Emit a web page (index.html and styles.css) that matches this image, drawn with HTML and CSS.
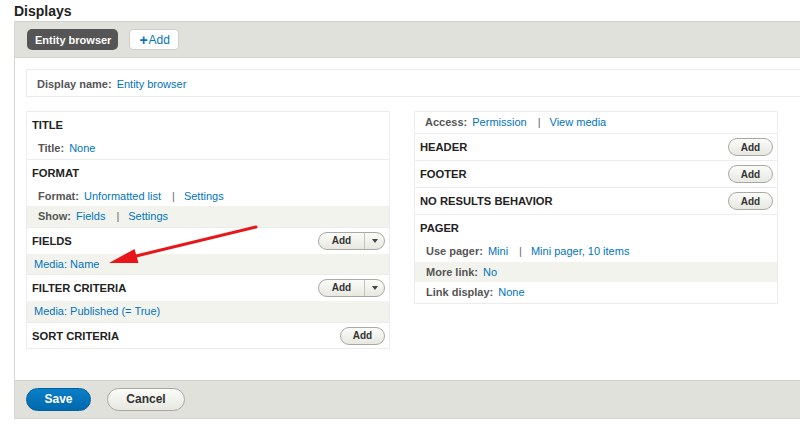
FILE: index.html
```html
<!DOCTYPE html>
<html lang="en">
<head>
<meta charset="utf-8">
<title>Displays</title>
<link rel="stylesheet" href="styles.css">
</head>
<body>
<h2 class="page-title">Displays</h2>
<div class="displays">
  <div class="tabs-bar">
    <span class="tab-active">Entity browser</span>
    <a class="tab-add" href="#"><span class="plus">+</span>Add</a>
  </div>
  <div class="display-body">
    <div class="display-name"><span class="label">Display name:</span> <a href="#">Entity browser</a></div>
    <div class="columns">
      <div class="col">
        <div class="sec">
          <div class="sec-head">TITLE</div>
          <div class="row"><span class="label">Title:</span> <a href="#">None</a></div>
        </div>
        <div class="sec">
          <div class="sec-head">FORMAT</div>
          <div class="row"><span class="label">Format:</span> <a href="#">Unformatted list</a><span class="sep">|</span><a href="#">Settings</a></div>
          <div class="row alt"><span class="label">Show:</span> <a href="#">Fields</a><span class="sep">|</span><a href="#">Settings</a></div>
        </div>
        <div class="sec">
          <div class="sec-head">FIELDS
            <span class="btn-split"><span class="btn-main">Add</span><span class="btn-drop"><span class="caret"></span></span></span>
          </div>
          <div class="row alt item"><a href="#">Media: Name</a></div>
        </div>
        <div class="sec">
          <div class="sec-head">FILTER CRITERIA
            <span class="btn-split"><span class="btn-main">Add</span><span class="btn-drop"><span class="caret"></span></span></span>
          </div>
          <div class="row alt item"><a href="#">Media: Published (= True)</a></div>
        </div>
        <div class="sec">
          <div class="sec-head last">SORT CRITERIA <span class="btn-add">Add</span></div>
        </div>
      </div>
      <div class="col">
        <div class="row first"><span class="label">Access:</span> <a href="#">Permission</a><span class="sep">|</span><a href="#">View media</a></div>
        <div class="sec">
          <div class="sec-head">HEADER <span class="btn-add">Add</span></div>
        </div>
        <div class="sec">
          <div class="sec-head">FOOTER <span class="btn-add">Add</span></div>
        </div>
        <div class="sec">
          <div class="sec-head">NO RESULTS BEHAVIOR <span class="btn-add">Add</span></div>
        </div>
        <div class="sec">
          <div class="sec-head">PAGER</div>
          <div class="row"><span class="label">Use pager:</span> <a href="#">Mini</a><span class="sep">|</span><a href="#">Mini pager, 10 items</a></div>
          <div class="row alt"><span class="label">More link:</span> <a href="#">No</a></div>
          <div class="row"><span class="label">Link display:</span> <a href="#">None</a></div>
        </div>
      </div>
    </div>
  </div>
  <div class="actions-bar">
    <span class="btn-save">Save</span>
    <span class="btn-cancel">Cancel</span>
  </div>
</div>
<svg class="annotation" width="800" height="431" viewBox="0 0 800 431" aria-hidden="true">
  <line x1="256" y1="227" x2="132" y2="257" stroke="#e8161b" stroke-width="3" stroke-linecap="round"/>
  <polygon points="109,263 134.5,249 138.5,263" fill="#e8161b"/>
</svg>
</body>
</html>
```
FILE: styles.css
```css
html, body {
  margin: 0;
  padding: 0;
  background: #fff;
  overflow: hidden;
  width: 800px;
  height: 431px;
}
body {
  font-family: "Liberation Sans", Arial, sans-serif;
  font-size: 11px;
  color: #333;
  position: relative;
}
a {
  color: #0074bd;
  text-decoration: none;
}
.page-title {
  margin: 0;
  height: 21px;
  line-height: 22px;
  padding-left: 14px;
  font-size: 14px;
  font-weight: bold;
  color: #222;
}
.displays {
  margin-left: 14px;
  width: 820px;
  border-left: 1px solid #d8d8d3;
}
.tabs-bar {
  display: flex;
  align-items: center;
  gap: 11px;
  height: 35px;
  padding-left: 12px;
  background: #e1e1dc;
  border-top: 1px solid #d2d2cd;
  border-bottom: 1px solid #d6d6d1;
}
.tab-active {
  display: inline-flex;
  align-items: center;
  height: 21px;
  padding: 0 7px 0 8px;
  background: #555;
  color: #fff;
  font-weight: bold;
  font-size: 11px;
  border-radius: 5px;
}
.tab-add {
  display: inline-flex;
  align-items: center;
  height: 19px;
  padding: 0 8px 0 9px;
  background: #fff;
  border: 1px solid #cfcfca;
  border-radius: 4px;
  font-size: 12px;
  color: #0074bd;
}
.tab-add .plus {
  font-weight: bold;
  font-size: 14px;
  margin-right: 1px;
}
.display-body {
  padding: 11px 0 31px 11px;
  background: #fff;
}
.display-name {
  height: 28px;
  line-height: 28px;
  padding-left: 10px;
  border: 1px solid #ebebeb;
  border-right: none;
  box-sizing: border-box;
  margin-bottom: 14px;
}
.label {
  font-weight: bold;
  color: #555;
  margin-right: 2px;
}
.columns {
  display: flex;
  align-items: flex-start;
  gap: 24px;
}
.col {
  width: 364px;
  border: 1px solid #ececec;
  box-sizing: border-box;
}
.sec {
  border-top: 1px solid #ececec;
}
.col > .sec:first-child {
  border-top: none;
}
.sec-head {
  display: flex;
  align-items: center;
  justify-content: space-between;
  height: 26px;
  padding: 0 4px 0 5px;
  font-weight: bold;
  font-size: 11.2px;
  color: #222;
}
.sec-head.last {
  height: 25px;
  padding-top: 1px;
  box-sizing: border-box;
}
.row {
  height: 20.5px;
  line-height: 20.5px;
  padding-left: 11px;
  white-space: nowrap;
}
.row.first {
  height: 21px;
  line-height: 21px;
  padding-left: 10px;
}
.row.alt {
  background: #f2f3ed;
}
.row.item {
  padding-left: 7px;
}
.sep {
  color: #666;
  margin: 0 9px 0 11px;
}
.btn-add,
.btn-split {
  display: inline-flex;
  align-items: center;
  height: 18px;
  box-sizing: border-box;
  border: 1px solid #a9a9a3;
  border-radius: 9px;
  background: linear-gradient(#fbfbf9, #e8e8e1);
  color: #333;
  font-size: 10px;
  font-weight: bold;
}
.btn-add {
  width: 45px;
  justify-content: center;
}
.btn-split {
  width: 67px;
}
.btn-main {
  width: 45px;
  text-align: center;
  border-right: 1px solid #c4c4be;
  height: 100%;
  line-height: 16px;
}
.btn-drop {
  flex: 1;
  display: flex;
  align-items: center;
  justify-content: center;
}
.caret {
  width: 0;
  height: 0;
  border-left: 3.5px solid transparent;
  border-right: 3.5px solid transparent;
  border-top: 4px solid #444;
}
.actions-bar {
  display: flex;
  align-items: center;
  gap: 16px;
  height: 37px;
  padding-left: 11px;
  background: #e1e1dc;
  border-top: 1px solid #d2d2cd;
  border-bottom: 1px solid #d6d6d1;
}
.btn-save,
.btn-cancel {
  display: inline-flex;
  align-items: center;
  justify-content: center;
  height: 23px;
  box-sizing: border-box;
  border-radius: 12px;
  font-size: 12px;
  font-weight: bold;
}
.btn-save {
  width: 65px;
  background: linear-gradient(#0a7fc7, #0069ad);
  border: 1px solid #0062a1;
  color: #fff;
}
.btn-cancel {
  width: 78px;
  background: linear-gradient(#fbfbf9, #e8e8e1);
  border: 1px solid #a9a9a3;
  color: #333;
}
.annotation {
  position: absolute;
  left: 0;
  top: 0;
  pointer-events: none;
}
```
